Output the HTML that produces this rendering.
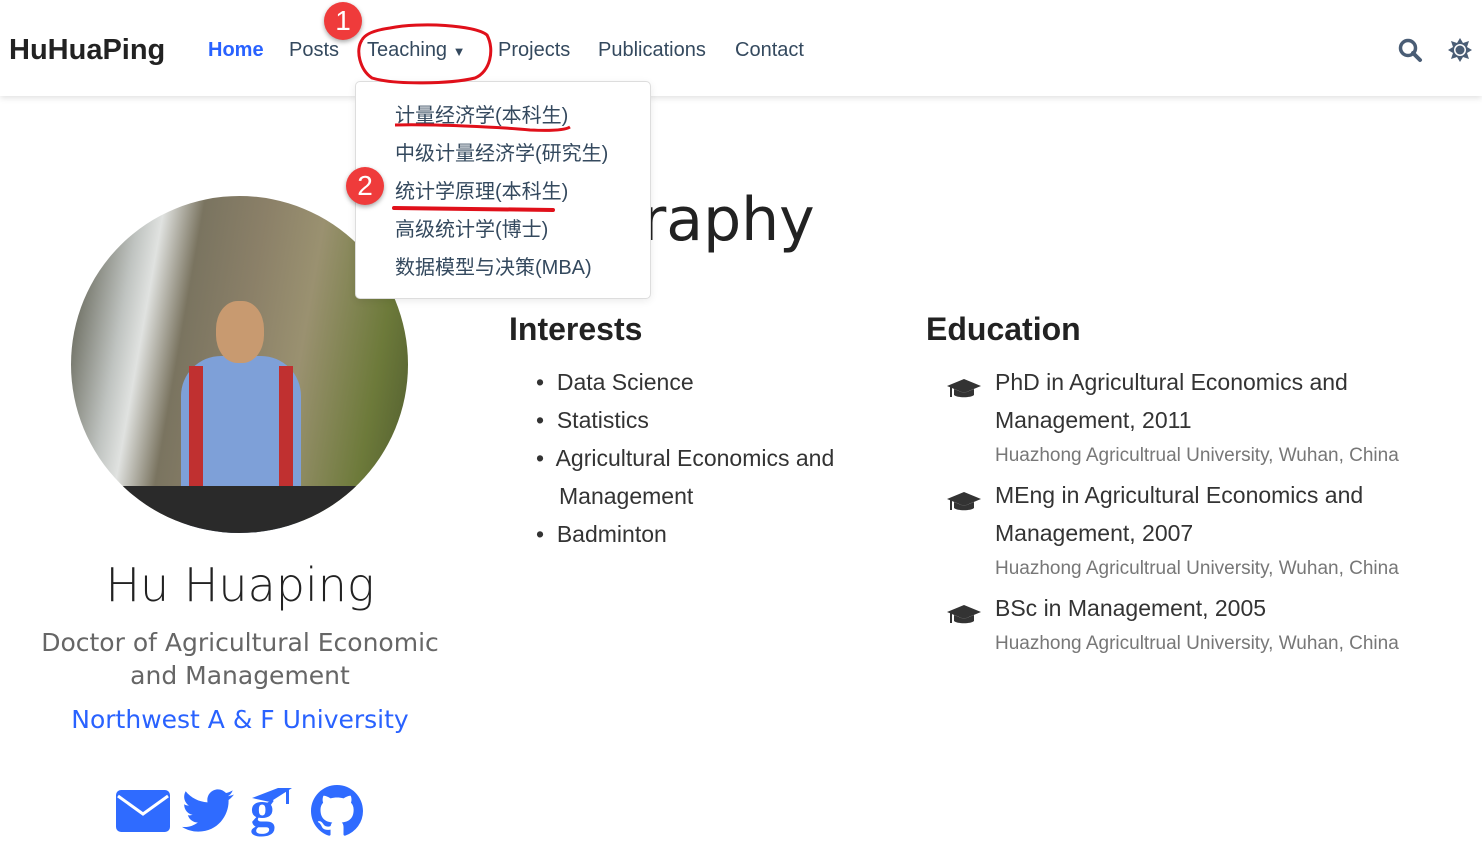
<!DOCTYPE html>
<html><head><meta charset="utf-8"><style>
*{margin:0;padding:0;box-sizing:border-box}
body{width:1482px;height:855px;overflow:hidden;background:#fff;font-family:"Liberation Sans","Noto Sans CJK SC",sans-serif;color:#343a40;position:relative}
.a{position:absolute;white-space:nowrap}
.nav{position:absolute;left:0;top:0;width:1482px;height:96px;background:#fff;box-shadow:0 2px 6px rgba(0,0,0,.12)}
.ni{font-size:20px;color:#34495e;top:39px}
.dd{position:absolute;left:355px;top:81px;width:296px;height:218px;background:#fff;border:1px solid #ddd;border-radius:5px;box-shadow:0 2px 8px rgba(0,0,0,.08)}
.di{font-size:20px;color:#34495e;left:395px}
.li{font-size:23px;color:#333}
.sm{font-size:19px;color:#777}
.red{position:absolute;border-radius:50%;background:#ef3b3b;color:#fff;font-size:28px;text-align:center;box-shadow:0 2px 5px rgba(0,0,0,.35)}
</style></head><body>
<div class="nav"></div>
<div class="a" style="left:9px;top:34px;font-size:29px;font-weight:bold;color:#222">HuHuaPing</div>
<div class="a ni" style="left:208px;color:#2962ff;font-weight:bold">Home</div>
<div class="a ni" style="left:289px">Posts</div>
<div class="a ni" style="left:367px">Teaching <span style="font-size:13px">▼</span></div>
<div class="a ni" style="left:498px">Projects</div>
<div class="a ni" style="left:598px">Publications</div>
<div class="a ni" style="left:735px">Contact</div>
<svg class="a" style="left:1398px;top:38px" width="26" height="26" viewBox="0 0 26 26"><circle cx="10" cy="10" r="7.5" fill="none" stroke="#4a5d75" stroke-width="3.5"/><path d="M15 15l7 7" stroke="#4a5d75" stroke-width="4" stroke-linecap="round"/></svg>
<svg class="a" style="left:1448px;top:38px" width="24" height="24" viewBox="0 0 24 24"><polygon points="12,0 15,5 21,3 19,9 24,12 19,15 21,21 15,19 12,24 9,19 3,21 5,15 0,12 5,9 3,3 9,5" fill="#4a5d75"/><circle cx="12" cy="12" r="6" fill="#fff"/><circle cx="12" cy="12" r="4.5" fill="#4a5d75"/></svg>

<div class="a" style="left:71px;top:196px;width:337px;height:337px;border-radius:50%;overflow:hidden;background:linear-gradient(100deg,#4a4a3a 0%,#bfc3c0 18%,#e0e2e0 24%,#7a7460 34%,#8b8068 50%,#9a9170 65%,#6d7a3a 85%,#4e5a2e 100%)">
<div style="position:absolute;left:110px;top:160px;width:120px;height:180px;background:#7ea0d8;border-radius:40px 40px 0 0"></div>
<div style="position:absolute;left:118px;top:170px;width:14px;height:120px;background:#c03030"></div>
<div style="position:absolute;left:208px;top:170px;width:14px;height:120px;background:#c03030"></div>
<div style="position:absolute;left:145px;top:105px;width:48px;height:62px;background:#c89a70;border-radius:45%"></div>
<div style="position:absolute;left:40px;top:290px;width:280px;height:50px;background:#2a2a2a"></div>
</div>

<div class="a" style="left:0;width:480px;text-align:center;top:558px;font-size:46px;color:#222;font-family:'DejaVu Sans',sans-serif;font-weight:300">Hu Huaping</div>
<div class="a" style="left:0;width:480px;text-align:center;top:626px;color:#666;line-height:33px;font-family:'DejaVu Sans',sans-serif;font-size:25px">Doctor of Agricultural Economic<br>and Management</div>
<div class="a" style="left:0;width:480px;text-align:center;top:705px;font-size:25px;color:#2962ff;font-family:'DejaVu Sans',sans-serif">Northwest A &amp; F University</div>

<svg class="a" style="left:116px;top:790px" width="54" height="42" viewBox="0 0 54 42"><rect x="0" y="0" width="54" height="42" rx="5" fill="#2f6bff"/><path d="M2 6l25 18 25-18" fill="none" stroke="#fff" stroke-width="3"/></svg>
<svg class="a" style="left:182px;top:788px" width="52" height="46" viewBox="0 0 24 20"><path fill="#2f6bff" d="M24 2.4c-.9.4-1.8.6-2.8.8 1-.6 1.8-1.6 2.2-2.7-1 .6-2 1-3.1 1.2C19.4.7 18.1 0 16.6 0c-2.7 0-4.9 2.2-4.9 4.9 0 .4 0 .8.1 1.1C7.7 5.8 4.1 3.9 1.7.9c-.4.7-.7 1.6-.7 2.5 0 1.7.9 3.200 2.2 4.1-.8 0-1.6-.2-2.2-.6v.1c0 2.4 1.7 4.4 3.900 4.8-.4.1-.8.2-1.300.2-.3 0-.6 0-.9-.1.6 2 2.4 3.4 4.6 3.4-1.7 1.3-3.8 2.1-6.1 2.1-.4 0-.8 0-1.2-.1 2.2 1.4 4.8 2.2 7.5 2.2 9.1 0 14-7.500 14-14v-.6c1-.7 1.8-1.6 2.5-2.5z"/></svg>
<div class="a" style="left:250px;top:780px;font-size:50px;color:#2f6bff;font-family:'Liberation Serif',serif;font-weight:bold">g</div>
<svg class="a" style="left:250px;top:788px" width="44" height="18" viewBox="0 0 44 18"><path d="M2 10L28 0h14L20 14z" fill="#2f6bff"/><rect x="36" y="2" width="3" height="14" fill="#2f6bff"/></svg>
<svg class="a" style="left:311px;top:785px" width="52" height="52" viewBox="0 0 16 16"><path fill="#2f6bff" d="M8 0C3.580 0 0 3.580 0 8c0 3.540 2.290 6.530 5.470 7.590.4.07.55-.17.55-.38 0-.19-.01-.82-.01-1.490-2.010.37-2.530-.49-2.690-.94-.09-.23-.48-.94-.82-1.130-.28-.15-.68-.52-.01-.53.63-.01 1.080.58 1.230.82.72 1.210 1.870.87 2.330.66.07-.52.28-.87.51-1.070-1.780-.2-3.640-.89-3.640-3.950 0-.87.31-1.590.82-2.150-.08-.2-.36-1.020.08-2.120 0 0 .67-.21 2.200.82.64-.18 1.320-.27 2-.27.68 0 1.360.09 2 .27 1.530-1.040 2.200-.82 2.200-.82.44 1.100.16 1.920.08 2.120.51.56.82 1.270.82 2.150 0 3.070-1.870 3.750-3.650 3.950.29.25.54.73.54 1.480 0 1.070-.01 1.930-.01 2.200 0 .21.15.46.55.38A8.013 8.013 0 0016 8c0-4.420-3.580-8-8-8z"/></svg>

<div class="a" style="left:509px;top:185px;font-size:60px;color:#222;font-family:'DejaVu Sans',sans-serif">Biography</div>

<div class="a" style="left:509px;top:311px;font-size:32px;font-weight:bold;color:#222">Interests</div>
<div class="a li" style="left:536px;top:369px">•&nbsp; Data Science</div>
<div class="a li" style="left:536px;top:407px">•&nbsp; Statistics</div>
<div class="a li" style="left:536px;top:445px">•&nbsp; Agricultural Economics and</div>
<div class="a li" style="left:559px;top:483px">Management</div>
<div class="a li" style="left:536px;top:521px">•&nbsp; Badminton</div>

<div class="a" style="left:926px;top:311px;font-size:32px;font-weight:bold;color:#222">Education</div>
<svg class="a" style="left:947px;top:378px" width="34" height="22" viewBox="0 0 34 22"><path d="M17 1L0 8l17 7 17-7z" fill="#333"/><path d="M7 11v6c3 3 17 3 20 0v-6l-10 4z" fill="#333"/><rect x="3" y="9" width="2" height="10" fill="#333"/></svg>
<div class="a li" style="left:995px;top:369px">PhD in Agricultural Economics and</div>
<div class="a li" style="left:995px;top:407px">Management, 2011</div>
<div class="a sm" style="left:995px;top:445px">Huazhong Agricultrual University, Wuhan, China</div>
<svg class="a" style="left:947px;top:491px" width="34" height="22" viewBox="0 0 34 22"><path d="M17 1L0 8l17 7 17-7z" fill="#333"/><path d="M7 11v6c3 3 17 3 20 0v-6l-10 4z" fill="#333"/><rect x="3" y="9" width="2" height="10" fill="#333"/></svg>
<div class="a li" style="left:995px;top:482px">MEng in Agricultural Economics and</div>
<div class="a li" style="left:995px;top:520px">Management, 2007</div>
<div class="a sm" style="left:995px;top:558px">Huazhong Agricultrual University, Wuhan, China</div>
<svg class="a" style="left:947px;top:604px" width="34" height="22" viewBox="0 0 34 22"><path d="M17 1L0 8l17 7 17-7z" fill="#333"/><path d="M7 11v6c3 3 17 3 20 0v-6l-10 4z" fill="#333"/><rect x="3" y="9" width="2" height="10" fill="#333"/></svg>
<div class="a li" style="left:995px;top:595px">BSc in Management, 2005</div>
<div class="a sm" style="left:995px;top:633px">Huazhong Agricultrual University, Wuhan, China</div>

<div class="dd"></div>
<div class="a di" style="top:99px">计量经济学(本科生)</div>
<div class="a di" style="top:137px">中级计量经济学(研究生)</div>
<div class="a di" style="top:175px">统计学原理(本科生)</div>
<div class="a di" style="top:213px">高级统计学(博士)</div>
<div class="a di" style="top:251px">数据模型与决策(MBA)</div>

<svg class="a" style="left:0;top:0" width="700" height="230">
<path d="M362 40C355 50 360 70 372 78 395 85 450 84 475 78 490 72 495 50 487 35 475 25 420 22 390 28 375 30 365 34 362 40" fill="none" stroke="#e0101a" stroke-width="3"/>
<path d="M395 125C430 124 500 127 530 130 550 131 565 130 570 127" fill="none" stroke="#e0101a" stroke-width="3"/>
<path d="M394 208L553 210" stroke="#e0101a" stroke-width="4" stroke-linecap="round"/>
</svg>
<div class="red" style="left:324px;top:2px;width:38px;height:38px;line-height:38px">1</div>
<div class="red" style="left:346px;top:167px;width:38px;height:38px;line-height:38px">2</div>
</body></html>
